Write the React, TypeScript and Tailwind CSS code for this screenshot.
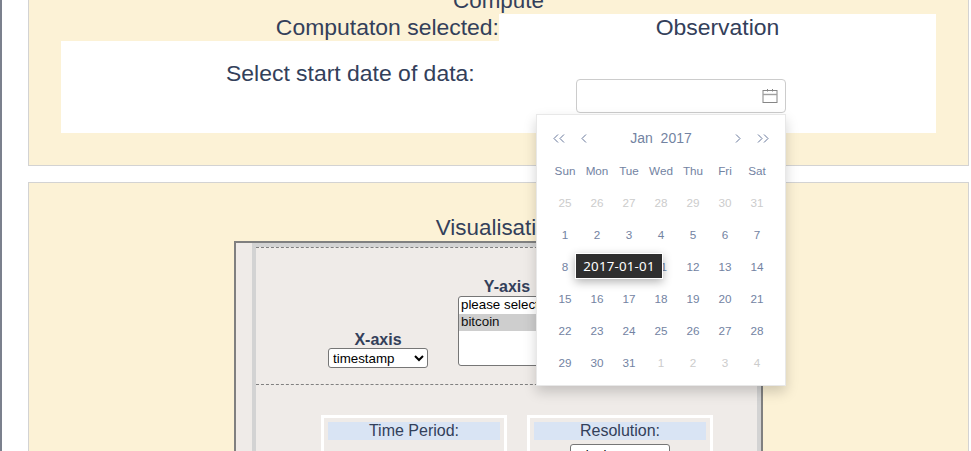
import React from "react";

const weekdays = ["Sun", "Mon", "Tue", "Wed", "Thu", "Fri", "Sat"];
const days: { n: number; muted: boolean }[] = [
  ...[25, 26, 27, 28, 29, 30, 31].map((n) => ({ n, muted: true })),
  ...Array.from({ length: 31 }, (_, i) => ({ n: i + 1, muted: false })),
  ...[1, 2, 3, 4].map((n) => ({ n, muted: true })),
];

function Chevron({ points, width }: { points: string[]; width: number }) {
  return (
    <svg width={width} height="9" viewBox={`0 0 ${width} 9`} fill="none" stroke="#66779a" strokeWidth="1">
      {points.map((p) => (
        <polyline key={p} points={p} />
      ))}
    </svg>
  );
}

function CalendarIcon() {
  return (
    <svg width="16" height="16" viewBox="0 0 16 16" fill="none" stroke="#868686" strokeWidth="1">
      <rect x="1" y="2.5" width="14" height="12" />
      <path d="M5.5 1v2.5M10.5 1v2.5" />
      <path d="M1 6.5h14" stroke="#a0a0a0" strokeWidth="1.4" />
    </svg>
  );
}

function Calendar() {
  return (
    <div className="absolute left-[-41px] top-[34px] z-10 h-[272px] w-[250px] border border-[#e8e8e8] bg-white pt-[7px] text-[#7383a2] shadow-[0_6px_12px_rgba(0,0,0,0.175)]">
      <div className="flex h-8 items-center pl-[16px] pr-[16px] text-[14px]">
        <Chevron width={12} points={["5,0.5 1,4.5 5,8.5", "11,0.5 7,4.5 11,8.5"]} />
        <span className="ml-4 flex">
          <Chevron width={6} points={["5,0.5 1,4.5 5,8.5"]} />
        </span>
        <div className="flex-1 whitespace-pre text-center">Jan{"  "}2017</div>
        <span className="mr-4 flex">
          <Chevron width={6} points={["1,0.5 5,4.5 1,8.5"]} />
        </span>
        <Chevron width={12} points={["1,0.5 5,4.5 1,8.5", "7,0.5 11,4.5 7,8.5"]} />
      </div>
      <div className="mx-3 mt-px grid grid-cols-7 text-center text-[11.7px] leading-8">
        {weekdays.map((d) => (
          <div key={d} className="whitespace-nowrap">{d}</div>
        ))}
        {days.map((d, i) => (
          <div key={i} className={d.muted ? "text-[#cccccc]" : ""}>{d.n}</div>
        ))}
      </div>
      <div className="absolute left-[38px] top-[138px] flex h-[26px] w-[88px] items-center justify-center border border-white bg-[#2f2f2f] font-['Noto_Sans',sans-serif] text-[13.3px] tracking-[0.2px] text-white shadow-[0_3px_10px_rgba(0,0,0,0.3)]">
        2017-01-01
      </div>
    </div>
  );
}

export default function App() {
  return (
    <div className="flex h-[451px] w-[971px] overflow-hidden bg-white font-['Liberation_Sans',Arial,sans-serif] text-[#33405a]">
      <div className="w-[2px] shrink-0 bg-[#7b808d]" />
      <div className="ml-[26px] w-[941px] shrink-0">
        <section className="flow-root h-[166px] border border-t-0 border-[#d3d3d3] bg-[#fcf2d6] px-8 text-[22.4px] leading-[27px]">
          <h2 className="-mt-[13px] text-center">Compute</h2>
          <div className="flex text-[22.95px]">
            <div className="w-[438px] text-right">Computaton selected:</div>
            <div className="flex-1 bg-white text-center">Observation</div>
          </div>
          <div className="flex h-[92px] bg-white">
            <div className="w-[515px] pt-[19px] text-[22.95px]">
              <span className="ml-[165px]">Select start date of data:</span>
            </div>
            <div className="relative mt-[38px] flex h-[34px] w-[210px] items-center justify-end rounded-[4px] border border-[#cccccc] bg-white pr-[7px]">
              <CalendarIcon />
              <Calendar />
            </div>
          </div>
        </section>

        <section className="mt-4 h-[300px] border border-[#d3d3d3] bg-[#fcf2d6] pt-[31px]">
          <h2 className="text-center text-[22.4px] leading-[27px]">Visualisation</h2>
          <div className="ml-[205px] h-[240px] w-[529px] border-2 border-[#808080] bg-[#efebe8] pl-4">
            <div className="h-full border-4 border-[#d3d3d3]">
              <div className="flex h-[138px] items-end border-y border-dashed border-[#808080]">
                <div className="mb-4 ml-[72px] w-[100px] text-center text-[16px] font-bold leading-4">
                  X-axis
                  <select className="block h-[20px] w-[100px] rounded-[3px] border border-[#767676] bg-white text-[13.333px] font-normal leading-normal text-black">
                    <option>timestamp</option>
                  </select>
                </div>
                <div className="mb-[18px] ml-[30px] w-[98px] text-center text-[16px] font-bold leading-[18px]">
                  Y-axis
                  <select multiple size={4} defaultValue={["bitcoin"]} className="block h-[70px] w-[98px] overflow-hidden rounded-[3px] border border-[#767676] bg-white text-left text-[13.333px] font-normal leading-normal text-black">
                    <option value="" className="h-[17px] px-[2px]">please select</option>
                    <option value="bitcoin" className="h-[17px] px-[2px]">bitcoin</option>
                  </select>
                </div>
              </div>
              <div className="ml-[65px] mt-[30px] flex gap-5 text-center text-[16px] leading-[18px]">
                <div className="h-[100px] w-[186px] border-[3px] border-white p-1">
                  <div className="bg-[#d9e4f4]">Time Period:</div>
                </div>
                <div className="h-[100px] w-[186px] border-[3px] border-white p-1">
                  <div className="bg-[#d9e4f4]">Resolution:</div>
                  <select className="mx-auto mt-1 block h-[20px] w-[100px] rounded-[3px] border border-[#767676] bg-white pl-1 text-[13.333px] leading-normal text-black">
                    <option>single page</option>
                  </select>
                </div>
              </div>
            </div>
          </div>
        </section>
      </div>
    </div>
  );
}
